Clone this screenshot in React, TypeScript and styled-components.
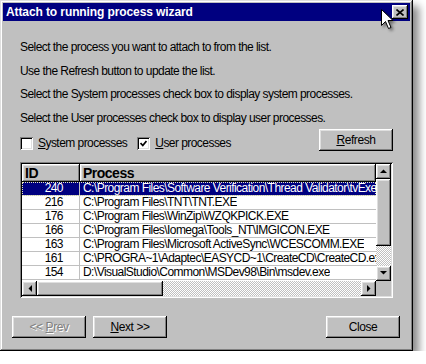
import styled, { createGlobalStyle, css } from "styled-components";

const GlobalStyle = createGlobalStyle`
  body {
    margin: 0;
    background: #fff;
    font-family: "Liberation Sans", Arial, sans-serif;
  }
`;

const raised = css`
  background: #c0c0c0;
  box-shadow: inset -1px -1px #000, inset 1px 1px #fff, inset -2px -2px #808080,
    inset 2px 2px #dfdfdf;
`;

const Window = styled.div`
  position: relative;
  width: 413px;
  height: 351px;
  box-sizing: border-box;
  padding: 3px;
  background: #c0c0c0;
  box-shadow: inset -1px -1px #000, inset 1px 1px #dfdfdf, inset -2px -2px #808080,
    inset 2px 2px #fff, 6px 6px 8px rgba(0, 0, 0, 0.45);
  display: flex;
  flex-direction: column;
`;

const TitleBar = styled.div`
  height: 18px;
  background: #000080;
  display: flex;
  align-items: center;
  justify-content: space-between;
  padding: 0 2px 0 3px;
`;

const Title = styled.span`
  color: #fff;
  font-weight: bold;
  font-size: 12px;
  letter-spacing: -0.1px;
`;

const CloseBox = styled.div`
  ${raised}
  width: 16px;
  height: 14px;
  display: flex;
  align-items: center;
  justify-content: center;
`;

const Body = styled.div`
  padding: 19px 17px 0 17px;
  display: flex;
  flex-direction: column;
`;

const Hints = styled.div`
  display: flex;
  flex-direction: column;
  gap: 9.5px;
`;

const Hint = styled.div`
  font-size: 12px;
  line-height: 14px;
  letter-spacing: -0.55px;
  color: #000;
`;

const OptionsRow = styled.div`
  margin-top: 4px;
  height: 22px;
  display: flex;
  align-items: flex-start;
  gap: 10px;
`;

const CheckLabel = styled.label`
  margin-top: 8px;
  display: flex;
  align-items: center;
  gap: 5px;
  font-size: 12px;
  line-height: 13px;
  letter-spacing: -0.55px;
`;

const Box = styled.span`
  width: 13px;
  height: 13px;
  box-sizing: border-box;
  background: #fff;
  box-shadow: inset 1px 1px #808080, inset -1px -1px #fff, inset 2px 2px #000,
    inset -2px -2px #dfdfdf;
  display: flex;
  align-items: center;
  justify-content: center;
`;

const Button = styled.button<{ $push?: boolean; $disabled?: boolean }>`
  ${raised}
  border: none;
  width: 74px;
  height: 22px;
  padding: 0;
  font-family: inherit;
  font-size: 12px;
  letter-spacing: -0.4px;
  color: ${(p) => (p.$disabled ? "#808080" : "#000")};
  text-shadow: ${(p) => (p.$disabled ? "1px 1px #fff" : "none")};
  margin-left: ${(p) => (p.$push ? "auto" : "0")};
`;

const ListView = styled.div`
  margin-top: 11px;
  height: 136px;
  box-sizing: border-box;
  padding: 2px;
  background: #c0c0c0;
  box-shadow: inset 1px 1px #808080, inset -1px -1px #fff, inset 2px 2px #000,
    inset -2px -2px #dfdfdf;
  display: grid;
  grid-template-columns: 1fr 15px;
  grid-template-rows: 1fr 15px;
`;

const ListMain = styled.div`
  background: #fff;
  overflow: hidden;
`;

const HeaderRow = styled.div`
  display: flex;
  height: 18px;
`;

const HeaderCell = styled.div<{ $w?: number }>`
  ${raised}
  box-sizing: border-box;
  width: ${(p) => (p.$w ? `${p.$w}px` : "auto")};
  flex: ${(p) => (p.$w ? "none" : "1")};
  padding: 0 3px;
  font-size: 14px;
  font-weight: bold;
  letter-spacing: -0.5px;
  line-height: 18px;
`;

const Row = styled.div<{ $sel?: boolean }>`
  display: flex;
  height: 14px;
  box-sizing: border-box;
  border-bottom: 1px solid #c0c0c0;
  font-size: 12px;
  line-height: 13px;
  letter-spacing: -0.55px;
  white-space: nowrap;
  color: ${(p) => (p.$sel ? "#fff" : "#000")};
  background: ${(p) => (p.$sel ? "#000080" : "#fff")};
  outline: ${(p) => (p.$sel ? "1px dotted #e8e8c0" : "none")};
  outline-offset: -1px;
`;

const IdCell = styled.div`
  width: 58px;
  flex: none;
  box-sizing: border-box;
  text-align: right;
  padding-right: 16px;
  border-right: 1px solid #c0c0c0;
`;

const PathCell = styled.div`
  padding-left: 3px;
  overflow: hidden;
`;

const VScroll = styled.div`
  display: flex;
  flex-direction: column;
`;

const HScroll = styled.div`
  display: flex;
`;

const ScrollBtn = styled.div`
  ${raised}
  width: 15px;
  height: 15px;
  flex: none;
  display: flex;
  align-items: center;
  justify-content: center;
`;

const Thumb = styled.div<{ $size: number; $horiz?: boolean }>`
  ${raised}
  flex: none;
  ${(p) => (p.$horiz ? `width: ${p.$size}px;` : `height: ${p.$size}px;`)}
`;

const Track = styled.div`
  flex: 1;
  background: repeating-conic-gradient(#c0c0c0 0% 25%, #fff 0% 50%) 0 0 / 2px 2px;
`;

const Corner = styled.div`
  background: #c0c0c0;
`;

const Footer = styled.div`
  padding: 18px 10px 0 9px;
  display: flex;
  gap: 7px;
`;

const Cursor = styled.svg`
  position: absolute;
  left: 381px;
  top: 9px;
  filter: drop-shadow(2px 2px 1.5px rgba(0, 0, 0, 0.45));
`;

const processes = [
  ["240", "C:\\Program Files\\Software Verification\\Thread Validator\\tvExe.exe"],
  ["216", "C:\\Program Files\\TNT\\TNT.EXE"],
  ["176", "C:\\Program Files\\WinZip\\WZQKPICK.EXE"],
  ["166", "C:\\Program Files\\Iomega\\Tools_NT\\IMGICON.EXE"],
  ["163", "C:\\Program Files\\Microsoft ActiveSync\\WCESCOMM.EXE"],
  ["161", "C:\\PROGRA~1\\Adaptec\\EASYCD~1\\CreateCD\\CreateCD.exe"],
  ["154", "D:\\VisualStudio\\Common\\MSDev98\\Bin\\msdev.exe"],
];

function Arrow({ dir }: { dir: "up" | "down" | "left" | "right" }) {
  const pts = {
    up: "0,4 7,4 3.5,0.5",
    down: "0,0 7,0 3.5,3.5",
    left: "4,0 4,7 0.5,3.5",
    right: "0,0 0,7 3.5,3.5",
  }[dir];
  const horiz = dir === "left" || dir === "right";
  return (
    <svg width={horiz ? 4 : 7} height={horiz ? 7 : 4}>
      <polygon points={pts} fill="#000" />
    </svg>
  );
}

export default function App() {
  return (
    <>
      <GlobalStyle />
      <Window>
        <TitleBar>
          <Title>Attach to running process wizard</Title>
          <CloseBox>
            <svg width="8" height="7">
              <path d="M0.5 0.5 L7.5 6.5 M7.5 0.5 L0.5 6.5" stroke="#000" strokeWidth="1.6" />
            </svg>
          </CloseBox>
        </TitleBar>
        <Body>
          <Hints>
            <Hint>Select the process you want to attach to from the list.</Hint>
            <Hint>Use the Refresh button to update the list.</Hint>
            <Hint>Select the System processes check box to display system processes.</Hint>
            <Hint>Select the User processes check box to display user processes.</Hint>
          </Hints>
          <OptionsRow>
            <CheckLabel>
              <Box />
              <span>
                <u>S</u>ystem processes
              </span>
            </CheckLabel>
            <CheckLabel>
              <Box>
                <svg width="7" height="7">
                  <path d="M0.5 3 L2.8 5.5 L6.5 1" stroke="#000" strokeWidth="1.8" fill="none" />
                </svg>
              </Box>
              <span>
                <u>U</u>ser processes
              </span>
            </CheckLabel>
            <Button $push>
              <u>R</u>efresh
            </Button>
          </OptionsRow>
          <ListView>
            <ListMain>
              <HeaderRow>
                <HeaderCell $w={58}>ID</HeaderCell>
                <HeaderCell>Process</HeaderCell>
              </HeaderRow>
              {processes.map(([id, path], i) => (
                <Row key={id} $sel={i === 0}>
                  <IdCell>{id}</IdCell>
                  <PathCell>{path}</PathCell>
                </Row>
              ))}
            </ListMain>
            <VScroll>
              <ScrollBtn>
                <Arrow dir="up" />
              </ScrollBtn>
              <Thumb $size={67} />
              <Track />
              <ScrollBtn>
                <Arrow dir="down" />
              </ScrollBtn>
            </VScroll>
            <HScroll>
              <ScrollBtn>
                <Arrow dir="left" />
              </ScrollBtn>
              <Thumb $size={126} $horiz />
              <Track />
              <ScrollBtn>
                <Arrow dir="right" />
              </ScrollBtn>
            </HScroll>
            <Corner />
          </ListView>
        </Body>
        <Footer>
          <Button $disabled>
            &lt;&lt; <u>P</u>rev
          </Button>
          <Button>
            <u>N</u>ext &gt;&gt;
          </Button>
          <Button $push>Close</Button>
        </Footer>
        <Cursor width="13" height="21" viewBox="0 0 13 21">
          <path
            d="M0.5 0.5 L0.5 16.5 L4.5 12.5 L7.5 19.5 L10 18.5 L7 11.5 L12 11.5 Z"
            fill="#fff"
            stroke="#000"
            strokeWidth="1"
          />
        </Cursor>
      </Window>
    </>
  );
}
